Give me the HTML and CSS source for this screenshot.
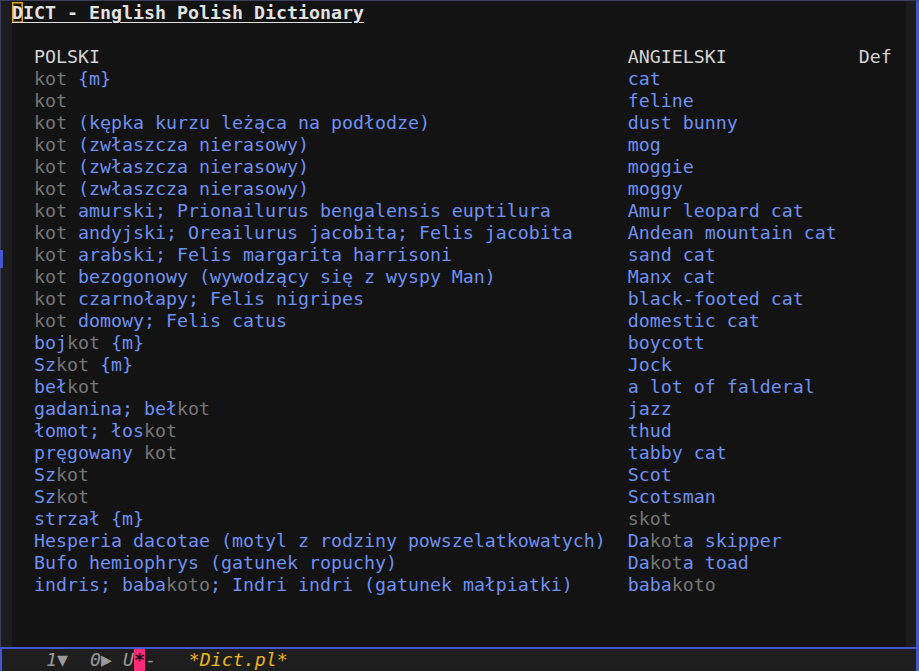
FILE: index.html
```html
<!DOCTYPE html>
<html lang="pl">
<head>
<meta charset="utf-8">
<title>DICT</title>
<link rel="stylesheet" href="styles.css">
</head>
<body>
<div class="frame">
  <div class="window">
    <div class="fringe"></div>
    <div class="buffer">
      <div class="line title"><span class="cursor">D</span>ICT - English Polish Dictionary</div>
      <div class="line"></div>
      <div class="row head"><span>POLSKI</span><span>ANGIELSKI</span><span>Def</span></div>
      <div class="row"><span><i>kot</i> {m}</span><span>cat</span></div>
      <div class="row"><span><i>kot</i></span><span>feline</span></div>
      <div class="row"><span><i>kot</i> (kępka kurzu leżąca na podłodze)</span><span>dust bunny</span></div>
      <div class="row"><span><i>kot</i> (zwłaszcza nierasowy)</span><span>mog</span></div>
      <div class="row"><span><i>kot</i> (zwłaszcza nierasowy)</span><span>moggie</span></div>
      <div class="row"><span><i>kot</i> (zwłaszcza nierasowy)</span><span>moggy</span></div>
      <div class="row"><span><i>kot</i> amurski; Prionailurus bengalensis euptilura</span><span>Amur leopard cat</span></div>
      <div class="row"><span><i>kot</i> andyjski; Oreailurus jacobita; Felis jacobita</span><span>Andean mountain cat</span></div>
      <div class="row"><span><i>kot</i> arabski; Felis margarita harrisoni</span><span>sand cat</span></div>
      <div class="row"><span><i>kot</i> bezogonowy (wywodzący się z wyspy Man)</span><span>Manx cat</span></div>
      <div class="row"><span><i>kot</i> czarnołapy; Felis nigripes</span><span>black-footed cat</span></div>
      <div class="row"><span><i>kot</i> domowy; Felis catus</span><span>domestic cat</span></div>
      <div class="row"><span>boj<i>kot</i> {m}</span><span>boycott</span></div>
      <div class="row"><span>Sz<i>kot</i> {m}</span><span>Jock</span></div>
      <div class="row"><span>beł<i>kot</i></span><span>a lot of falderal</span></div>
      <div class="row"><span>gadanina; beł<i>kot</i></span><span>jazz</span></div>
      <div class="row"><span>łomot; łos<i>kot</i></span><span>thud</span></div>
      <div class="row"><span>pręgowany <i>kot</i></span><span>tabby cat</span></div>
      <div class="row"><span>Sz<i>kot</i></span><span>Scot</span></div>
      <div class="row"><span>Sz<i>kot</i></span><span>Scotsman</span></div>
      <div class="row"><span>strzał {m}</span><span><i>skot</i></span></div>
      <div class="row"><span>Hesperia dacotae (motyl z rodziny powszelatkowatych)</span><span>Da<i>kot</i>a skipper</span></div>
      <div class="row"><span>Bufo hemiophrys (gatunek ropuchy)</span><span>Da<i>kot</i>a toad</span></div>
      <div class="row"><span>indris; baba<i>koto</i>; Indri indri (gatunek małpiatki)</span><span>baba<i>koto</i></span></div>
    </div>
    <div class="fringe right"></div>
    <div class="edge-mark"></div>
  </div>
  <div class="modeline">
    <span class="ml-num">1</span><span class="ml-glyph">▼</span>
    <span class="ml-num ml-gap">0</span><span class="ml-glyph">▶</span>
    <span class="ml-num ml-gap1">U</span><span class="ml-mod">*</span><span class="ml-dash">-</span>
    <span class="ml-name">*Dict.pl*</span>
  </div>
</div>
</body>
</html>
```
FILE: styles.css
```css
html, body {
  margin: 0;
  padding: 0;
  background: #131313;
}
body {
  font-family: "DejaVu Sans Mono", monospace;
  font-size: 18.27px;
  line-height: 22px;
  color: #d4d4d4;
}
.frame {
  width: 919px;
  height: 671px;
  display: flex;
  flex-direction: column;
  overflow: hidden;
}
.window {
  position: relative;
  flex: 1;
  display: flex;
  border-top: 1px solid #3b3f5e;
  border-left: 1px solid #3b3f5e;
  border-right: 3px solid #4656cf;
  min-height: 0;
}
.fringe {
  width: 11px;
  background: #1c1c1c;
}
.fringe.right {
  width: 10px;
}
.buffer {
  flex: 1;
  padding-top: 1px;
  background: #131313;
}
.line {
  height: 22px;
  white-space: pre;
}
.title {
  font-weight: bold;
  color: #e2e2e2;
  text-decoration: underline;
  text-underline-offset: 3px;
}
.cursor {
  box-shadow: inset 0 0 0 1.5px #e8a514;
}
.row {
  display: grid;
  grid-template-columns: 54ch 21ch auto;
  padding-left: 2ch;
  height: 22px;
  color: #6f90f2;
  white-space: pre;
}
.row.head {
  color: #d4d4d4;
}
.row i {
  font-style: normal;
  color: #767676;
}
.edge-mark {
  position: absolute;
  left: -1px;
  top: 249px;
  width: 3px;
  height: 18px;
  background: #4656cf;
}
.modeline {
  height: 22px;
  border-top: 2px solid #4656cf;
  border-left: 2px solid #4656cf;
  border-right: 3px solid #4656cf;
  background: #1e1e1e;
  display: flex;
  align-items: center;
  padding-left: 4ch;
  line-height: 22px;
  white-space: pre;
}
.modeline > span {
  display: inline-block;
  width: 1ch;
  text-align: center;
  overflow: visible;
}
.ml-num {
  color: #9a9a9a;
  font-style: italic;
}
.ml-glyph {
  color: #9a9a9a;
}
.ml-gap {
  margin-left: 2ch;
}
.ml-gap1 {
  margin-left: 1ch;
}
.ml-mod {
  background: #ff2a78;
  color: #111;
  font-weight: bold;
}
.ml-dash {
  color: #9a9a9a;
}
.modeline > .ml-name {
  width: auto;
  margin-left: 3ch;
  color: #e8b420;
  font-style: italic;
}
```
